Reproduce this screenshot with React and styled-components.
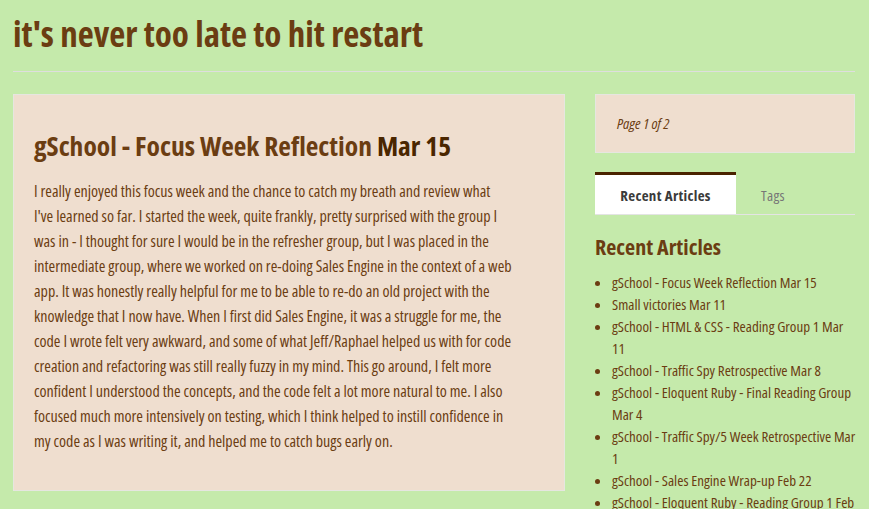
import React from 'react';
import styled, { createGlobalStyle } from 'styled-components';

const GlobalStyle = createGlobalStyle`
  html, body {
    margin: 0;
    padding: 0;
    background: #c5eaab;
  }
  body {
    font-family: 'Open Sans', 'Roboto Condensed', sans-serif;
    font-stretch: 75%;
    color: #6b3d12;
  }
`;

const Page = styled.div`
  padding: 0 14px 0 13px;
`;

const SiteHeader = styled.header`
  padding: 12px 0 16px;
  border-bottom: 1px solid #dedede;
`;

const SiteTitle = styled.h1`
  margin: 0;
  font-size: 35px;
  line-height: 43px;
  font-weight: bold;
  color: #6b3d12;
`;

const Columns = styled.div`
  display: grid;
  grid-template-columns: 552px 260px;
  column-gap: 30px;
  align-items: start;
  padding-top: 22px;
`;

const Card = styled.article`
  background: #efdecf;
  border: 1px solid #e6e6e0;
  padding: 34px 20px 36px;
`;

const PostTitle = styled.h2`
  margin: 0 0 16px;
  font-size: 27.5px;
  line-height: 34px;
  font-weight: bold;
  color: #6b3d12;
`;

const PostDate = styled.span`
  color: #4a2600;
`;

const Body = styled.p`
  margin: 0;
  font-size: 16px;
  line-height: 25px;
`;

// one span per line so the wrap follows the original post
const Line = styled.span`
  display: block;
  white-space: nowrap;
`;

const Sidebar = styled.aside`
  display: flex;
  flex-direction: column;
`;

const PagerBox = styled.div`
  background: #efdecf;
  border: 1px solid #e6e6e0;
  padding: 20px 21px;
  font-size: 15px;
  line-height: 17px;
  font-style: italic;
  color: #6b3d12;
`;

const Tabs = styled.div`
  display: flex;
  margin-top: 19px;
  border-bottom: 1px solid #e4e4e4;
`;

const Tab = styled.div`
  width: ${p => (p.$active ? '141px' : 'auto')};
  height: 39px;
  display: flex;
  align-items: center;
  justify-content: center;
  padding: ${p => (p.$active ? '0' : '0 25px')};
  font-size: 15px;
  font-weight: ${p => (p.$active ? 'bold' : 'normal')};
  letter-spacing: 0.3px;
  color: ${p => (p.$active ? '#3a3a3a' : '#777')};
  background: ${p => (p.$active ? '#fff' : 'transparent')};
  border-top: 3px solid ${p => (p.$active ? '#4a2300' : 'transparent')};
`;

const WidgetTitle = styled.h3`
  margin: 18px 0 12px;
  font-size: 22px;
  line-height: 26px;
  font-weight: bold;
  color: #6b3d12;
`;

const List = styled.ul`
  margin: 0;
  padding-left: 17px;
  font-size: 15px;
  line-height: 22px;
`;

const Item = styled.li`
  color: #6b3d12;
`;

const bodyLines = [
  'I really enjoyed this focus week and the chance to catch my breath and review what',
  "I've learned so far. I started the week, quite frankly, pretty surprised with the group I",
  'was in - I thought for sure I would be in the refresher group, but I was placed in the',
  'intermediate group, where we worked on re-doing Sales Engine in the context of a web',
  'app. It was honestly really helpful for me to be able to re-do an old project with the',
  'knowledge that I now have. When I first did Sales Engine, it was a struggle for me, the',
  'code I wrote felt very awkward, and some of what Jeff/Raphael helped us with for code',
  'creation and refactoring was still really fuzzy in my mind. This go around, I felt more',
  'confident I understood the concepts, and the code felt a lot more natural to me. I also',
  'focused much more intensively on testing, which I think helped to instill confidence in',
  'my code as I was writing it, and helped me to catch bugs early on.',
];

const articles = [
  ['gSchool - Focus Week Reflection Mar 15'],
  ['Small victories Mar 11'],
  ['gSchool - HTML & CSS - Reading Group 1 Mar', '11'],
  ['gSchool - Traffic Spy Retrospective Mar 8'],
  ['gSchool - Eloquent Ruby - Final Reading Group', 'Mar 4'],
  ['gSchool - Traffic Spy/5 Week Retrospective Mar', '1'],
  ['gSchool - Sales Engine Wrap-up Feb 22'],
  ['gSchool - Eloquent Ruby - Reading Group 1 Feb', '15'],
];

export default function App() {
  return (
    <Page>
      <GlobalStyle />
      <SiteHeader>
        <SiteTitle>it's never too late to hit restart</SiteTitle>
      </SiteHeader>
      <Columns>
        <Card>
          <PostTitle>
            gSchool - Focus Week Reflection <PostDate>Mar 15</PostDate>
          </PostTitle>
          <Body>
            {bodyLines.map((l, i) => (
              <Line key={i}>{l}</Line>
            ))}
          </Body>
        </Card>
        <Sidebar>
          <PagerBox>Page 1 of 2</PagerBox>
          <Tabs>
            <Tab $active>Recent Articles</Tab>
            <Tab>Tags</Tab>
          </Tabs>
          <WidgetTitle>Recent Articles</WidgetTitle>
          <List>
            {articles.map(lines => (
              <Item key={lines.join(' ')}>
                {lines.map((l, i) => (
                  <Line key={i}>{l}</Line>
                ))}
              </Item>
            ))}
          </List>
        </Sidebar>
      </Columns>
    </Page>
  );
}
